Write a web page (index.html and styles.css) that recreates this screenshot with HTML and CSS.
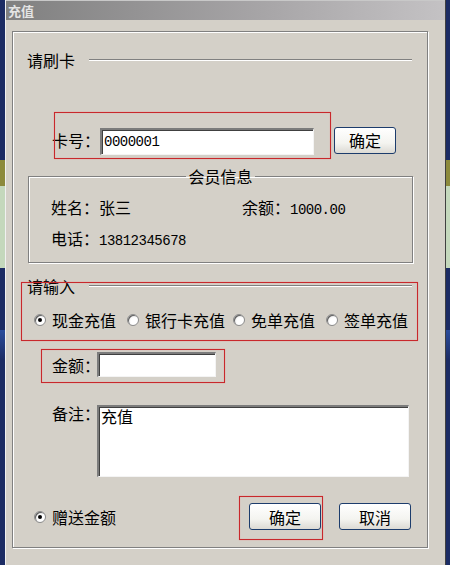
FILE: index.html
```html
<!DOCTYPE html>
<html lang="zh-CN">
<head>
    <meta charset="UTF-8">
    <title>充值</title>
    <link rel="stylesheet" href="styles.css">
</head>
<body>
    <div class="window">
        <div class="titlebar">充值</div>
        <div class="client">
            <div class="panel">
                <div class="section-head"><span>请刷卡</span><i class="rule"></i></div>

                <div class="card-row">
                    <label class="label">卡号：</label>
                    <input class="field card-input" type="text" value="0000001">
                    <button class="btn">确定</button>
                </div>

                <fieldset class="member">
                    <legend>会员信息</legend>
                    <div class="member-row">
                        <span class="cell">姓名：张三</span>
                        <span>余额：<span class="num">1000.00</span></span>
                    </div>
                    <div class="member-row">
                        <span>电话：<span class="num">13812345678</span></span>
                    </div>
                </fieldset>

                <div class="section-head input-head"><span>请输入</span><i class="rule"></i></div>

                <div class="radio-row">
                    <span class="radio checked"></span><span class="opt">现金充值</span>
                    <span class="radio"></span><span class="opt">银行卡充值</span>
                    <span class="radio"></span><span class="opt">免单充值</span>
                    <span class="radio"></span><span class="opt">签单充值</span>
                </div>

                <div class="amount-row">
                    <label class="label short">金额：</label>
                    <input class="field amount-input" type="text">
                </div>

                <div class="note-row">
                    <label class="label short">备注：</label>
                    <textarea class="field note">充值</textarea>
                </div>

                <div class="footer-row">
                    <span class="radio checked"></span><span class="opt">赠送金额</span>
                    <span class="spacer"></span>
                    <button class="btn wide">确定</button>
                    <button class="btn wide">取消</button>
                </div>

                <!-- red annotation boxes -->
                <div class="mark mark-card"></div>
                <div class="mark mark-input"></div>
                <div class="mark mark-amount"></div>
                <div class="mark mark-ok"></div>
            </div>
        </div>
    </div>
</body>
</html>
```

FILE: styles.css
```css
body {
    margin: 0;
    height: 565px;
    overflow: hidden;
    font-family: "Noto Sans CJK SC", "Liberation Sans", sans-serif;
    font-size: 16px;
    color: #000;
    background: linear-gradient(#1c2c64 0, #1c2c64 160px, #8c8a3c 160px, #8c8a3c 186px, #c4d8bc 186px, #c4d8bc 268px, #1c2c64 268px, #1c2c64 330px, #2a4c9c 330px, #1c2c64 360px);
}
.window {
    margin-left: 5px;
    width: 441px;
    height: 570px;
    box-sizing: border-box;
    background: #d4d0c8;
    border-left: 1px solid #f0f0f0;
    border-right: 1px solid #404040;
}
.titlebar {
    height: 20px;
    line-height: 20px;
    padding-left: 2px;
    font-size: 13px;
    font-weight: bold;
    color: #e4e4e4;
    background: linear-gradient(to right, #808080, #a8a6a8 60%, #c4c2c4);
    border-top: 1px solid #c8c8c8;
    box-sizing: border-box;
}
.client {
    padding: 11px 0 0 6px;
}
.panel {
    position: relative;
    width: 416px;
    height: 517px;
    box-sizing: border-box;
    border: 1px solid #808080;
    box-shadow: inset 1px 1px 0 #fff, 1px 1px 0 #fff;
    padding: 17px 0 0 14px;
}
.section-head {
    display: flex;
    align-items: center;
    height: 22px;
    line-height: 22px;
}
.rule {
    flex: 0 0 323px;
    margin-left: 14px;
    height: 0;
    border-top: 1px solid #808080;
    border-bottom: 1px solid #fff;
}
.card-row {
    display: flex;
    align-items: center;
    margin-top: 55px;
    margin-left: 25px;
    height: 28px;
}
.label {
    flex: none;
    width: 48px;
    line-height: 22px;
    white-space: nowrap;
}
.label.short {
    width: 45px;
}
.field {
    box-sizing: border-box;
    border-style: solid;
    border-width: 2px 1px 1px 2px;
    border-color: #7c7c7c #f4f4f4 #f4f4f4 #7c7c7c;
    box-shadow: inset 1px 1px 0 #404040;
    background: #fff;
    outline: none;
    font-family: "Liberation Mono", monospace;
    font-size: 14px;
    letter-spacing: -0.5px;
    padding: 0 2px;
    margin: 0;
}
.card-input {
    width: 214px;
    height: 27px;
    margin-top: 2px;
}
.btn {
    box-sizing: border-box;
    height: 27px;
    width: 62px;
    margin: 0 0 0 20px;
    padding: 0;
    border: 1px solid #1c3c6c;
    border-radius: 3px;
    background: linear-gradient(#ffffff, #f4f4f0 60%, #dcdad4);
    font-family: "Noto Sans CJK SC", sans-serif;
    font-size: 16px;
    color: #000;
}
.member {
    margin: 11px 0 0 1px;
    width: 385px;
    box-sizing: border-box;
    padding: 9px 0 13px 0;
    border: 1px solid #808080;
    box-shadow: inset 1px 1px 0 #fff, 1px 1px 0 #fff;
}
.member legend {
    margin: 0 auto;
    padding: 0 2px;
    line-height: 22px;
}
.member-row {
    display: flex;
    padding-left: 22px;
    line-height: 22px;
    height: 22px;
}
.member-row + .member-row {
    margin-top: 9px;
}
.cell {
    width: 191px;
}
.num {
    font-family: "Liberation Mono", monospace;
    font-size: 14px;
    letter-spacing: -0.5px;
}
.input-head {
    margin-top: 12px;
}
.radio-row {
    display: flex;
    align-items: center;
    height: 22px;
    margin-top: 12px;
    margin-left: 7px;
}
.radio {
    box-sizing: border-box;
    width: 12px;
    height: 12px;
    border-radius: 50%;
    border: 1px solid #8c8c8c;
    background: radial-gradient(circle at 65% 65%, #fff 40%, #e0e0e0 75%, #b8b8b8);
    box-shadow: inset 1px 1px 0 #606060;
    position: relative;
    flex: none;
}
.radio.checked::after {
    content: "";
    position: absolute;
    left: 3px;
    top: 3px;
    width: 4px;
    height: 4px;
    border-radius: 50%;
    background: #000;
}
.opt {
    margin-left: 6px;
    margin-right: 11px;
    line-height: 22px;
}
.radio-row .opt:nth-child(4) {
    margin-right: 8px;
}
.amount-row {
    display: flex;
    align-items: center;
    margin-top: 21px;
    margin-left: 25px;
    height: 25px;
}
.amount-input {
    width: 119px;
    height: 25px;
}
.note-row {
    display: flex;
    align-items: flex-start;
    margin-top: 28px;
    margin-left: 25px;
}
.note-row .label {
    margin-top: -3px;
}
.note {
    width: 312px;
    height: 72px;
    resize: none;
    padding: 0 2px;
    font-family: "Noto Sans CJK SC", sans-serif;
    font-size: 16px;
    letter-spacing: 0;
    line-height: 18px;
    overflow: hidden;
}
.footer-row {
    display: flex;
    align-items: center;
    margin-top: 26px;
    margin-left: 7px;
    width: 377px;
    height: 27px;
}
.spacer {
    flex: 1;
}
.btn.wide {
    width: 72px;
    margin-left: 18px;
}
.mark {
    position: absolute;
    border: 1px solid #c8282c;
    box-shadow: 0 0 1px rgba(240, 120, 120, 0.8), inset 0 0 1px rgba(240, 120, 120, 0.8);
}
.mark-card {
    left: 41px;
    top: 80px;
    width: 275px;
    height: 45px;
}
.mark-input {
    left: 8px;
    top: 250px;
    width: 395px;
    height: 57px;
}
.mark-amount {
    left: 28px;
    top: 317px;
    width: 182px;
    height: 32px;
}
.mark-ok {
    left: 226px;
    top: 464px;
    width: 82px;
    height: 42px;
}
```
